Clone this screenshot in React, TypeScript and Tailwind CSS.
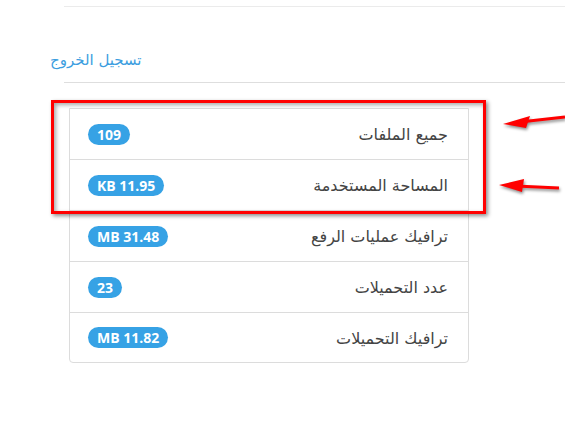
const rows = [
  { label: "جميع الملفات", value: "109" },
  { label: "المساحة المستخدمة", value: "KB 11.95" },
  { label: "ترافيك عمليات الرفع", value: "MB 31.48" },
  { label: "عدد التحميلات", value: "23" },
  { label: "ترافيك التحميلات", value: "MB 11.82" },
];

const App = () => {
  return (
    <div
      className="relative w-[565px] h-[435px] bg-white overflow-hidden"
      style={{ fontFamily: '"DejaVu Sans", "Open Sans", sans-serif' }}
    >
      <div className="ml-[64px] h-[7px] border-b border-[#ebebeb]" />

      <div className="h-[76px] border-b border-[#dedede] ml-[64px] flex items-end pb-[12px]">
        <a href="#" dir="rtl" className="ml-[-14px] text-[15px] text-[#3c9ee0] leading-[20px]">
          تسجيل الخروج
        </a>
      </div>

      <div className="mt-[25px] ml-[69px] w-[400px] border border-[#dcdcdc] rounded-b-[4px]">
        {rows.map((row, idx) => (
          <div
            key={idx}
            dir="rtl"
            className={`flex items-center justify-between pr-[20px] pl-[18px] ${
              idx < rows.length - 1 ? "h-[51px] border-b border-[#dcdcdc]" : "h-[49px]"
            }`}
          >
            <span className="text-[16px] text-[#444] pt-[2px]">{row.label}</span>
            <span
              dir="ltr"
              className="bg-[#36a2e5] text-white rounded-full px-[9px] h-[21px] leading-[21px] text-[14px] font-bold"
              style={{ fontFamily: '"Open Sans", sans-serif' }}
            >
              {row.value}
            </span>
          </div>
        ))}
      </div>

      <div className="absolute left-[51px] top-[100px] w-[435px] h-[114px] border-[3px] border-[#ff0000] shadow-[2px_2px_4px_rgba(0,0,0,0.45),inset_2px_2px_4px_rgba(0,0,0,0.35)]" />

      <svg
        className="absolute left-0 top-0"
        width="565"
        height="435"
        style={{ filter: "drop-shadow(1px 2px 1.5px rgba(0,0,0,0.45))" }}
      >
        <line x1="565" y1="117" x2="520" y2="122" stroke="#ff0000" strokeWidth="3" />
        <polygon points="503,124 530,116 526,128" fill="#ff0000" />
        <line x1="559" y1="188" x2="516" y2="186" stroke="#ff0000" strokeWidth="3" />
        <polygon points="499,185 524,179 522,192" fill="#ff0000" />
      </svg>
    </div>
  );
};

export default App;
